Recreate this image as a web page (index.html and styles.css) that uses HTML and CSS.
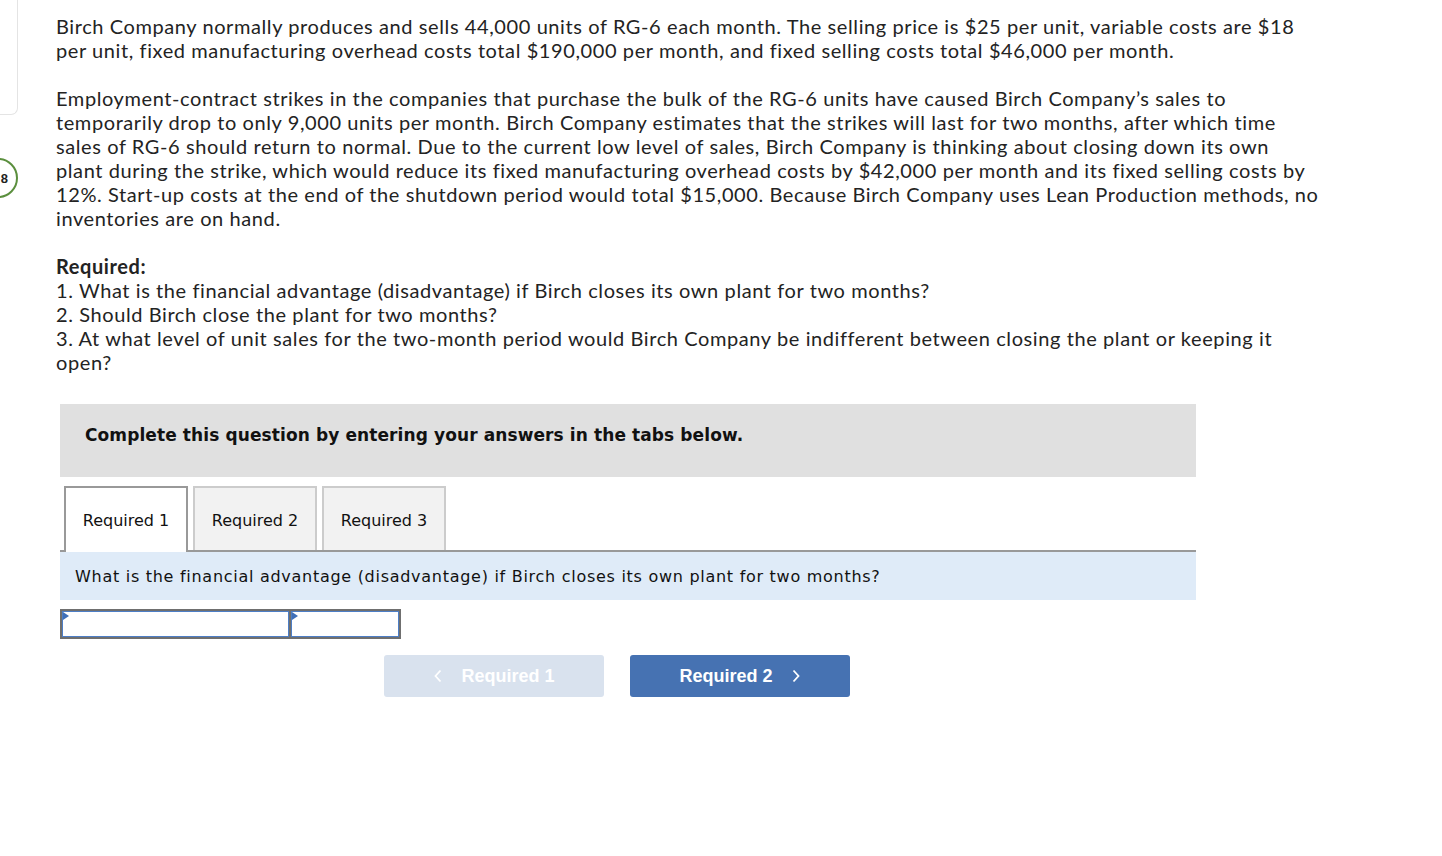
FILE: index.html
```html
<!DOCTYPE html>
<html>
<head>
<meta charset="utf-8">
<link rel="stylesheet" href="styles.css">
</head>
<body>
<div class="page">
  <div class="rail">
    <div class="card"></div>
    <div class="badge">8</div>
  </div>
  <main class="main">
    <p class="para">Birch Company normally produces and sells 44,000 units of RG-6 each month. The selling price is $25 per unit, variable costs are $18<br>per unit, fixed manufacturing overhead costs total $190,000 per month, and fixed selling costs total $46,000 per month.</p>
    <p class="para">Employment-contract strikes in the companies that purchase the bulk of the RG-6 units have caused Birch Company’s sales to<br>temporarily drop to only 9,000 units per month. Birch Company estimates that the strikes will last for two months, after which time<br>sales of RG-6 should return to normal. Due to the current low level of sales, Birch Company is thinking about closing down its own<br>plant during the strike, which would reduce its fixed manufacturing overhead costs by $42,000 per month and its fixed selling costs by<br>12%. Start-up costs at the end of the shutdown period would total $15,000. Because Birch Company uses Lean Production methods, no<br>inventories are on hand.</p>
    <p class="para"><strong>Required:</strong><br>1. What is the financial advantage (disadvantage) if Birch closes its own plant for two months?<br>2. Should Birch close the plant for two months?<br>3. At what level of unit sales for the two-month period would Birch Company be indifferent between closing the plant or keeping it<br>open?</p>

    <div class="panel">
      <div class="instructions">Complete this question by entering your answers in the tabs below.</div>
      <div class="tabs">
        <div class="tab active">Required 1</div>
        <div class="tab">Required 2</div>
        <div class="tab">Required 3</div>
      </div>
      <div class="question">What is the financial advantage (disadvantage) if Birch closes its own plant for two months?</div>
      <div class="answer">
        <div class="cell wide"><span class="flag"></span></div>
        <div class="cell narrow"><span class="flag"></span></div>
      </div>
      <div class="nav">
        <button class="btn prev"><svg class="chev" width="10" height="14" viewBox="0 0 10 14"><path d="M7.5 1.5 L2.5 7 L7.5 12.5" fill="none" stroke="currentColor" stroke-width="1.8"/></svg>Required 1</button>
        <button class="btn next">Required 2<svg class="chev" width="10" height="14" viewBox="0 0 10 14"><path d="M2.5 1.5 L7.5 7 L2.5 12.5" fill="none" stroke="currentColor" stroke-width="1.8"/></svg></button>
      </div>
    </div>
  </main>
</div>
</body>
</html>
```

FILE: styles.css
```css
html, body {
  margin: 0;
  padding: 0;
  background: #ffffff;
}

.page {
  display: flex;
  width: 1442px;
  min-height: 856px;
  overflow: hidden;
}

.rail {
  width: 56px;
  flex: none;
  display: flex;
  flex-direction: column;
}

.card {
  width: 20px;
  height: 115px;
  margin-left: -2px;
  box-sizing: border-box;
  border: 1px solid #e4e4e4;
  border-top: none;
  border-left: none;
  border-radius: 0 0 7px 0;
}

.badge {
  width: 40px;
  height: 40px;
  margin-top: 43px;
  margin-left: -22px;
  box-sizing: border-box;
  border: 2px solid #5b8f3e;
  border-radius: 50%;
  font-family: "Liberation Sans", Arial, sans-serif;
  font-weight: bold;
  font-size: 13px;
  color: #222;
  display: flex;
  align-items: center;
  justify-content: flex-end;
  padding-right: 8px;
}

.main {
  flex: none;
  width: 1340px;
  padding-top: 14px;
}

.para {
  margin: 0 0 24px 0;
  font-family: Lato, "Open Sans", sans-serif;
  font-size: 20px;
  letter-spacing: 0.59px;
  line-height: 24px;
  color: #232323;
  white-space: nowrap;
}

.para strong {
  font-weight: bold;
}

.panel {
  width: 1136px;
  margin-left: 4px;
  margin-top: 30px;
  font-family: "DejaVu Sans", Verdana, sans-serif;
}

.instructions {
  background: #e0e0e0;
  height: 73px;
  box-sizing: border-box;
  padding: 21px 0 0 25px;
  font-size: 17px;
  letter-spacing: 0.1px;
  font-weight: bold;
  color: #111;
}

.tabs {
  display: flex;
  gap: 5px;
  margin-top: 9px;
  padding-left: 4px;
  border-bottom: 2px solid #999999;
  height: 64px;
}

.tab {
  width: 124px;
  box-sizing: border-box;
  border: 2px solid #cccccc;
  border-bottom: none;
  background: #f2f2f2;
  font-size: 16px;
  color: #111;
  display: flex;
  align-items: center;
  justify-content: center;
}

.tab.active {
  background: #ffffff;
  border-color: #999999;
  height: 66px;
  position: relative;
  z-index: 1;
  margin-bottom: -2px;
}

.tab:not(.active) {
  height: 64px;
  padding-top: 2px;
}

.question {
  background: #dfebf8;
  height: 48px;
  box-sizing: border-box;
  padding: 15px 0 0 15px;
  font-size: 16px;
  letter-spacing: 0.72px;
  color: #111;
}

.answer {
  display: flex;
  margin-top: 9px;
  width: 341px;
  height: 30px;
  box-sizing: border-box;
  border: 2px solid #6f6f6f;
  background: #6f6f6f;
  gap: 2px;
}

.cell {
  position: relative;
  box-sizing: border-box;
  border: 1px solid #4d7ec6;
  background: #ffffff;
  height: 26px;
}

.cell.wide {
  width: 227px;
}

.cell.narrow {
  width: 108px;
}

.flag {
  position: absolute;
  left: 0;
  top: 0;
  width: 0;
  height: 0;
  border-top: 4px solid transparent;
  border-bottom: 4px solid transparent;
  border-left: 6px solid #3f6fb8;
}

.nav {
  display: flex;
  gap: 26px;
  margin-top: 16px;
  padding-left: 324px;
}

.btn {
  width: 220px;
  height: 42px;
  border: none;
  border-radius: 3px;
  font-family: "Liberation Sans", Arial, sans-serif;
  font-weight: bold;
  font-size: 18px;
  color: #ffffff;
  display: flex;
  align-items: center;
  justify-content: center;
  gap: 18px;
  padding: 0;
}

.btn.prev {
  background: #d9e2ee;
}

.btn.next {
  background: #4672b2;
}

.chev {
  display: block;
}
```
